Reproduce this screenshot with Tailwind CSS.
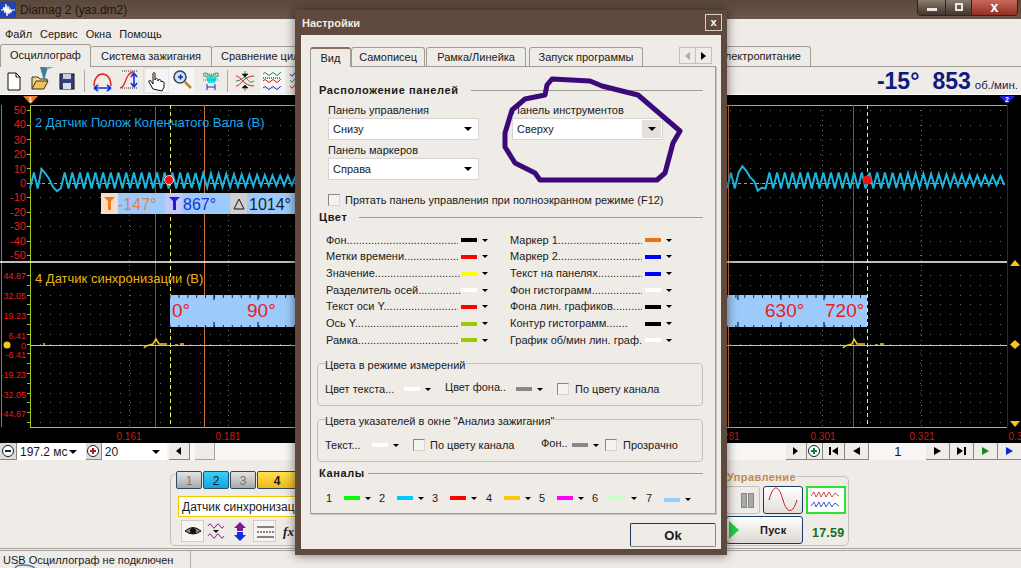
<!DOCTYPE html>
<html lang="ru">
<head>
  <meta charset="UTF-8" />
  <title>Diamag 2</title>
  <script src="https://cdn.jsdelivr.net/npm/@tailwindcss/browser@4"></script>
</head>
<body class="w-[1021px] h-[568px] overflow-hidden relative bg-[#efebe7] text-[11px] leading-none text-[#1a1a1a] font-['Liberation_Sans',sans-serif]">

  <!-- Main window -->
  <div class="flex flex-col h-[568px]">

    <!-- Title bar -->
    <div class="h-[19px] shrink-0 flex items-center bg-gradient-to-b from-[#5c483b] to-[#6b584b] relative">
      <svg width="16" height="16" viewBox="0 0 16 16" class="ml-0 shrink-0">
        <rect width="16" height="16" fill="#1f45b5"/>
        <path d="M1 8h2l1-3 1 6 1-9 1 12 1-10 1 8 1-5 1 3 1-2h3" fill="none" stroke="#fff" stroke-width="1.2"/>
      </svg>
      <span class="ml-[4px] text-[12px] text-[#1e1510]">Diamag 2 (уаз.dm2)</span>
      <!-- Window buttons -->
      <div class="ml-auto mr-[3px] -mt-[4px] flex h-[16px] rounded-b-[4px] overflow-hidden border border-t-0 border-[#2f251e]">
        <div class="w-[28px] flex items-center justify-center bg-gradient-to-b from-[#8a7a6e] to-[#43352c] border-r border-[#2f251e]"><div class="w-[10px] h-[3px] mt-[5px] bg-[#e8e8e8]"></div></div>
        <div class="w-[26px] flex items-center justify-center bg-gradient-to-b from-[#8a7a6e] to-[#43352c] border-r border-[#2f251e]"><div class="w-[8px] h-[8px] border-2 border-[#e8e8e8]"></div></div>
        <div class="w-[45px] flex items-center justify-center bg-gradient-to-b from-[#c9695a] to-[#8f3024] text-white font-bold text-[14px]">x</div>
      </div>
    </div>

    <!-- Menu -->
    <div class="h-[25px] shrink-0 flex items-center gap-[8px] pl-[5px] pt-[5px]">
      <span>Файл</span><span>Сервис</span><span>Окна</span><span>Помощь</span>
    </div>

    <!-- Tabs -->
    <div class="h-[23px] shrink-0 flex items-end border-b border-[#a09c98] relative">
      <div class="w-[91px] h-[23px] pt-[5px] text-center bg-[#efebe7] border border-b-0 border-[#a09c98] rounded-t-[3px] relative z-10 -mb-px">Осциллограф</div>
      <div class="w-[121px] h-[20px] pt-[4px] text-center border border-l-0 border-b-0 border-[#a09c98] rounded-t-[3px]">Система зажигания</div>
      <div class="w-[130px] h-[20px] pt-[4px] pl-[9px] border border-l-0 border-b-0 border-[#a09c98] rounded-t-[3px] whitespace-nowrap overflow-hidden">Сравнение цилиндров</div>
      <div class="w-[469px] h-[20px] pt-[4px] pr-[9px] text-right border border-l-0 border-b-0 border-[#a09c98] rounded-t-[3px]">Электропитание</div>
    </div>

    <!-- Toolbar -->
    <div class="h-[27px] shrink-0 flex items-center pl-[4px] relative">
      <svg width="310" height="27" viewBox="0 67 310 27" class="shrink-0 -ml-[4px]">
        <path d="M8 73h8l4 4v13H8z" fill="#fff" stroke="#111"/><path d="M16 73v4h4" fill="none" stroke="#111"/>
        <path d="M32 89v-12h6l2 2h7v3" fill="#f5d98a" stroke="#333"/><path d="M32 89l4-8h12l-4 8z" fill="#f2c14e" stroke="#333"/>
        <rect x="60" y="74" width="14" height="15" fill="#34407a" stroke="#111"/><rect x="63" y="74" width="8" height="5" fill="#ccd"/><rect x="63" y="83" width="8" height="6" fill="#dde"/>
        <line x1="84.500" y1="70" x2="84.500" y2="92" stroke="#aaa"/>
        <path d="M94 86c0-16 17-16 17 0" fill="none" stroke="#d22" stroke-width="1.300"/><path d="M94 88h17M94 88l4-3M94 88l4 3M111 88l-4-3M111 88l-4 3" stroke="#1133dd" stroke-width="1.600" fill="none"/>
        <path d="M120 88c6 0 5-16 14-16" fill="none" stroke="#d22" stroke-width="1.300"/><path d="M122 71h16M122 88h16" stroke="#333" stroke-dasharray="1 1"/><path d="M134 73v14M134 73l-3 4M134 73l3 4M134 87l-3-4M134 87l3-4" stroke="#1133dd" stroke-width="1.600" fill="none"/>
        <rect x="144" y="68" width="25" height="25" fill="#f7f5f3" stroke="#d8d4d0"/>
        <path d="M153 89l-4-7c-1-2 1-2 2-1l2 3v-10c0-2 2-2 2 0v6c0-2 3-2 3 0v1c0-2 3-2 3 0v1c0-1 3-1 3 1v4l-2 4z" fill="#fff" stroke="#111"/>
        <rect x="169" y="68" width="25" height="25" fill="#f7f5f3"/>
        <circle cx="180" cy="77" r="6" fill="#cfe4f7" stroke="#345" stroke-width="1.500"/><path d="M178 77h5M180.500 74.500v5" stroke="#1133aa" stroke-width="1.600"/><path d="M185 82l6 6" stroke="#b08a30" stroke-width="2.500"/>
        <path d="M203 74c4-3 6 2 8 2s4-5 8-2M203 76h16" stroke="#0a6" fill="none"/><path d="M206 77h11l-2 6h-7z" fill="#2de"/><path d="M203 74h16M203 80h16" stroke="#c33" stroke-dasharray="1 1"/><path d="M207 87h8M207 84v6M215 84v6" stroke="#1133dd" fill="none"/>
        <line x1="227.500" y1="70" x2="227.500" y2="92" stroke="#aaa"/>
        <path d="M236 76c5 0 7 10 18 10M236 86c5 0 7-10 18-10" stroke="#c22" fill="none"/><path d="M236 81c5 0 7-4 9-4s4 8 9 4" stroke="#284" fill="none"/><path d="M245 71v3M245 88v3M242 74h6l-3 3zM242 88h6l-3-3z" fill="#111" stroke="#111" stroke-width=".6"/>
        <rect x="260" y="68" width="25" height="25" fill="#f7f5f3"/>
        <path d="M263 74q2-3 4 0t4 0 4 0 4 0 2-1" stroke="#186" fill="none"/><path d="M263 78h18" stroke="#111" stroke-dasharray="1 1"/><path d="M263 81q2-3 4 0t4 0 4 0 4 0 2-1" stroke="#c22" fill="none"/><path d="M263 88q2-3 4 0t4 0 4 0 4 0 2-1" stroke="#22c" fill="none"/>
        <path d="M290 74q2 4 4 0t4 0 4 0" stroke="#22c" fill="none"/><path d="M290 80q2 4 4 0t4 0 4 0" stroke="#0a6" fill="none"/><path d="M290 86q2 4 4 0t4 0 4 0" stroke="#c22" fill="none"/>
      </svg>
      <div class="ml-auto mr-[3px] flex items-baseline text-[#0f1a80] font-bold text-[23px] mt-[2px]">
        <span>-15°</span><span class="ml-[13px]">853</span><span class="ml-[4px] font-normal text-[11.500px] text-[#1a1a50]">об./мин.</span>
      </div>
    </div>

    <!-- Scope plot -->
    <div class="h-[349px] shrink-0 bg-black border-t border-white relative">
      <svg id="plot" width="1021" height="348" viewBox="0 95 1021 348" class="block font-['Liberation_Sans',sans-serif]">
        <g id="grid"></g>
        <g stroke="#a2c81e" stroke-width="1"><path d="M30.500 105v323M30 105.500h977M30 427.500h977" fill="none"/></g>
        <g id="ticks"></g>
        <!-- markers -->
        <line x1="1.500" y1="105" x2="1.500" y2="427" stroke="#b8683c"/>
        <line x1="155.500" y1="105" x2="155.500" y2="427" stroke="#4658b8"/>
        <line x1="853.500" y1="105" x2="853.500" y2="427" stroke="#4658b8"/>
        <line x1="204.500" y1="105" x2="204.500" y2="427" stroke="#d0743c"/>
        <line x1="728.500" y1="105" x2="728.500" y2="427" stroke="#d0743c"/>
        <line x1="1007.500" y1="105" x2="1007.500" y2="427" stroke="#1c1c9c"/>
        <line x1="170.500" y1="105" x2="170.500" y2="427" stroke="#f4f060" stroke-dasharray="4 3"/>
        <line x1="867.500" y1="105" x2="867.500" y2="427" stroke="#f4f060" stroke-dasharray="4 3"/>
        <line x1="30" y1="183.500" x2="1007" y2="183.500" stroke="#b9b23a" stroke-dasharray="3 3"/>
        <line x1="0" y1="262" x2="1007" y2="262" stroke="#fff" stroke-width="1.500"/>
        <!-- channel 2 -->
        <polyline id="wave" fill="none" stroke="#1cb4de" stroke-width="2"/>
        <circle cx="169" cy="180" r="4.500" fill="#f01010" stroke="#fff" stroke-width=".8"/>
        <circle cx="867" cy="180" r="4.500" fill="#f01010"/>
        <!-- channel 4 -->
        <line x1="30" y1="345.500" x2="1007" y2="345.500" stroke="#f2c81a" stroke-width="1.200"/>
        <path d="M144 348l2-2 7-2 3-5 3 5h8M175 345h3M180 344h4M43 344h2" fill="none" stroke="#f2c81a" stroke-width="1.500"/>
        <path d="M843 348l2-2 7-2 2-5 3 5h8M875 345h3M880 344h4" fill="none" stroke="#f2c81a" stroke-width="1.500"/>
        <!-- handles -->
        <path d="M23 96h15l-7.500 8z" fill="#f07a1e"/><text x="30.500" y="102" font-size="7" font-weight="bold" fill="#fff" text-anchor="middle">1</text>
        <path d="M999 96h16l-8 8z" fill="#1c1ce8"/><text x="1007" y="102" font-size="7" font-weight="bold" fill="#fff" text-anchor="middle">2</text>
        <path d="M1015 260l5 6h-10z" fill="#f2c81a"/>
        <path d="M1015 340l5 4.500-5 4.500-5-4.500z" fill="#f2c81a"/>
        <path d="M1010 421h10l-5 6z" fill="#f2c81a"/>
        <circle cx="7" cy="345" r="3.500" fill="#f2c81a"/>
        <!-- axis labels -->
        <g fill="#ee1c1c" font-size="11" text-anchor="end">
          <text x="26" y="114">50</text><text x="26" y="128">40</text><text x="26" y="144">30</text><text x="26" y="158">20</text><text x="26" y="173">10</text><text x="26" y="187">0</text><text x="26" y="201">-10</text><text x="26" y="216">-20</text><text x="26" y="230">-30</text><text x="26" y="245">-40</text><text x="26" y="259">-50</text>
          <g font-size="9"><text x="26" y="279">44.87</text><text x="26" y="299">32.05</text><text x="26" y="319">19.23</text><text x="26" y="339">6.41</text><text x="26" y="349">0</text><text x="26" y="358">-6.41</text><text x="26" y="378">-19.23</text><text x="26" y="398">-32.05</text><text x="26" y="417">-44.87</text></g>
        </g>
        <g fill="#c81c1c" font-size="10" text-anchor="middle">
          <text x="129" y="440">0.161</text><text x="228" y="440">0.181</text><text x="727" y="440">0.281</text><text x="823" y="440">0.301</text><text x="922" y="440">0.321</text><text x="1021" y="440">0.341</text>
        </g>
        <text x="35" y="127" font-size="13" fill="#18a8ee">2 Датчик Полож Коленчатого Вала (B)</text>
        <text x="35" y="283" font-size="13" fill="#efb414">4 Датчик синхронизации (B)</text>
        <!-- angle read-out -->
        <rect x="101" y="193" width="194" height="21" fill="#9ccbfb"/>
        <rect x="101" y="193" width="17" height="21" fill="#fbdcc8"/><rect x="165" y="193" width="17" height="21" fill="#c8c8f8"/><rect x="230" y="193" width="17" height="21" fill="#cfcfcf"/>
        <path d="M104 197h11l-4 4v9h-3v-9z" fill="#f07a1e"/><path d="M169 197h11l-4 4v9h-3v-9z" fill="#1c1ce8"/><path d="M239 199l5 10h-10z" fill="none" stroke="#111"/>
        <g font-size="16"><text x="118" y="210" fill="#d8805a">-147°</text><text x="183" y="210" fill="#1c30d8">867°</text><text x="249" y="210" fill="#14203c">1014°</text></g>
        <!-- crank ruler -->
        <rect x="170" y="295" width="125" height="32" fill="#9ccbfb"/><rect x="727" y="295" width="140" height="32" fill="#9ccbfb"/>
        <g id="rticks" stroke="#222"></g>
        <g font-size="19" fill="#e82020"><text x="172" y="317">0°</text><text x="247" y="317">90°</text><text x="765" y="317">630°</text><text x="825" y="317">720°</text></g>
      </svg>
    </div>

    <!-- Time strip -->
    <div class="h-[17px] shrink-0 flex items-center bg-[#f8f6f4]">
      <div class="w-[17px] h-[17px] flex items-center justify-center bg-[#dfdbd7] border-r border-b border-[#8a8682]"><svg width="14" height="14"><circle cx="7" cy="7" r="5.500" fill="#fff" stroke="#123"/><path d="M4 7h6" stroke="#123" stroke-width="2"/></svg></div>
      <div class="w-[69px] h-[17px] flex items-center bg-white pl-[3px] text-[12px] whitespace-nowrap">197.2 мс<span class="ml-auto mr-[9px] border-x-[4px] border-t-[4px] border-x-transparent border-t-black"></span></div>
      <div class="w-[16px] h-[17px] flex items-center justify-center bg-[#dfdbd7] border-r border-b border-[#8a8682]"><svg width="14" height="14"><circle cx="7" cy="7" r="5.500" fill="#fff" stroke="#123"/><path d="M4 7h6M7 4v6" stroke="#c01020" stroke-width="2"/></svg></div>
      <div class="w-[65px] h-[17px] flex items-center bg-white pl-[3px] text-[12px]">20<span class="ml-auto mr-[7px] border-x-[4px] border-t-[4px] border-x-transparent border-t-black"></span></div>
      <div class="ml-[2px] w-[21px] h-[17px] flex items-center justify-center bg-[#efebe7] border-r border-b border-[#8a8682]"><span class="border-y-[4px] border-r-[5px] border-y-transparent border-r-black"></span></div>
      <div class="ml-[5px] w-[20px] h-[17px] bg-[#efebe7] border-r border-b border-[#a5a19d]"></div>
      <div class="ml-[571px] w-[21px] h-[17px] flex items-center justify-center bg-[#efebe7] border-r border-b border-[#8a8682]"><span class="border-y-[4px] border-l-[5px] border-y-transparent border-l-black"></span></div>
      <div class="w-[17px] h-[17px] flex items-center justify-center bg-[#efebe7] border-r border-b border-[#8a8682]"><svg width="14" height="14"><circle cx="7" cy="7" r="5.500" fill="#fff" stroke="#123"/><path d="M4 7h6M7 4v6" stroke="#108030" stroke-width="2"/></svg></div>
      <div class="w-[22px] h-[17px] flex items-center justify-center gap-[1px] bg-[#efebe7] border-r border-b border-[#8a8682]"><span class="w-[2px] h-[8px] bg-black"></span><span class="border-y-[4px] border-r-[6px] border-y-transparent border-r-black"></span></div>
      <div class="w-[24px] h-[17px] flex items-center justify-center bg-[#efebe7] border-r border-b border-[#8a8682]"><span class="border-y-[4px] border-r-[7px] border-y-transparent border-r-black"></span></div>
      <div class="w-[57px] h-[17px] text-center text-[13px] pt-[2px]">1</div>
      <div class="w-[24px] h-[17px] flex items-center justify-center bg-[#efebe7] border-r border-b border-[#8a8682]"><span class="border-y-[4px] border-l-[7px] border-y-transparent border-l-black"></span></div>
      <div class="w-[24px] h-[17px] flex items-center justify-center gap-[1px] bg-[#efebe7] border-r border-b border-[#8a8682]"><span class="border-y-[4px] border-l-[6px] border-y-transparent border-l-black"></span><span class="w-[2px] h-[8px] bg-black"></span></div>
      <div class="w-[24px] h-[17px] flex items-center justify-center bg-[#efebe7] border-r border-b border-[#8a8682]"><span class="border-y-[4px] border-l-[7px] border-y-transparent border-l-[#108a20]"></span></div>
      <div class="w-[23px] h-[17px] flex items-center justify-center bg-[#efebe7] border-b border-[#8a8682]"><span class="border-y-[4px] border-l-[7px] border-y-transparent border-l-[#1020e0]"></span></div>
    </div>

    <!-- Control panel -->
    <div class="h-[88px] shrink-0 flex pt-[14px] pl-[170px] gap-[250px]">
      <div class="w-[300px] h-[72px] border border-[#c4c0bc] rounded-[5px] relative">
        <div class="absolute left-[5px] -top-[4px] flex gap-[1px]">
          <div class="w-[26px] h-[18px] text-center pt-[3px] text-[12px] text-[#777] bg-gradient-to-b from-[#e4e4e4] to-[#a8a8a8] border border-[#2c4a66] rounded-[2px]">1</div>
          <div class="w-[26px] h-[18px] text-center pt-[3px] text-[12px] bg-gradient-to-b from-[#38d0f8] to-[#08a8e0] border border-[#2c4a66] rounded-[2px]">2</div>
          <div class="w-[26px] h-[18px] text-center pt-[3px] text-[12px] text-[#777] bg-gradient-to-b from-[#e4e4e4] to-[#a8a8a8] border border-[#2c4a66] rounded-[2px]">3</div>
          <div class="w-[40px] h-[18px] text-center pt-[3px] text-[12px] font-bold bg-gradient-to-b from-[#ffe050] to-[#f4b808] border border-[#2c4a66] rounded-[2px]">4</div>
        </div>
        <div class="absolute left-[7px] top-[21px] w-[280px] h-[21px] bg-white border border-[#f0c800] pl-[3px] pt-[4px] text-[12px] whitespace-nowrap">Датчик синхронизации</div>
        <div class="absolute left-[10px] top-[45px] flex items-center gap-[1px]">
          <svg width="23" height="22" class="bg-[#f7f5f3] border border-[#d0ccc8]"><path d="M3 10q8-7 16 0-8 6-16 0z" fill="#888" stroke="#111"/><circle cx="11" cy="10" r="3" fill="#111"/></svg>
          <svg width="23" height="22"><path d="M3 6q2-4 4 0t4 0 4 0 4 0M3 16q2-4 4 0t4 0 4 0 4 0" stroke="#8a1a9a" fill="none"/><path d="M8 10h6l-3 3z" fill="#111"/></svg>
          <svg width="23" height="22"><path d="M11 2l6 6h-3v3H8V8H5z" fill="#7a1a9a"/><path d="M11 21l6-6h-3v-3H8v3H5z" fill="#1030e0"/></svg>
          <svg width="23" height="22" class="bg-[#f7f5f3] border border-[#d0ccc8]"><path d="M3 6h17M3 16h17" stroke="#111"/><path d="M3 11h17" stroke="#111" stroke-dasharray="2 1"/></svg>
          <span class="w-[23px] text-center italic font-bold font-['Liberation_Serif',serif] text-[13px]">fx</span>
        </div>
      </div>
      <!-- Управление -->
      <div class="w-[129px] h-[70px] mt-[2px] border border-[#c4c0bc] rounded-[5px] relative">
        <span class="absolute left-[5px] -top-[5px] bg-[#efebe7] font-bold text-[11px] tracking-[0.4px] text-[#c08a50] px-[1px]">Управление</span>
        <div class="absolute left-[5px] top-[9px] w-[34px] h-[28px] border border-[#c4c0bc] rounded-[3px] flex items-center justify-center gap-[1px] pl-[8px]"><span class="w-[6px] h-[15px] bg-[#a8a8a8] border border-[#888]"></span><span class="w-[6px] h-[15px] bg-[#a8a8a8] border border-[#888]"></span></div>
        <div class="absolute left-[42px] top-[9px] w-[40px] h-[28px] border border-[#1c3a66] rounded-[3px] bg-gradient-to-b from-white to-[#e2deda]"><svg width="38" height="26"><path d="M5 13c5-18 10-14 14 0s10 14 14 0" fill="none" stroke="#c81c1c"/></svg></div>
        <div class="absolute left-[85px] top-[9px] w-[40px] h-[28px] border-2 border-[#30e030] bg-white"><svg width="36" height="24"><path d="M3 8l3-4 2 5 3-5 2 5 3-5 2 5 3-5 3 5 3-4 4 3" fill="none" stroke="#c81c1c" stroke-width=".8"/><path d="M3 18l3-4 2 5 3-5 2 5 3-5 2 5 3-5 3 5 3-4 4 3" fill="none" stroke="#1030c0" stroke-width=".8"/></svg></div>
        <div class="absolute left-[5px] top-[39px] w-[77px] h-[28px] border border-[#1c3a66] rounded-[3px] bg-gradient-to-b from-white to-[#dcd8d4] flex items-center">
          <span class="ml-[2px] border-y-[9px] border-l-[10px] border-y-transparent border-l-[#20d040]"></span>
          <span class="ml-[21px] font-bold text-[11px] tracking-[0.3px]">Пуск</span>
        </div>
        <span class="absolute left-[91px] top-[50px] font-bold text-[12.500px] text-[#107020] tracking-[0.2px]">17.59</span>
      </div>
    </div>

    <!-- Status bar -->
    <div class="flex-1 flex border-t-[3px] border-double border-[#a8a4a0]">
      <div class="w-[191px] pl-[3px] pt-[4px] border-r border-[#b0aca8] whitespace-nowrap">USB Осциллограф не подключен</div>
    </div>
  </div>

  <!-- Settings dialog -->
  <div class="absolute left-[295px] top-[10px] w-[432px] h-[545px] bg-[#5f4a3d] pt-[25px] px-[6px] pb-[6px] shadow-[0_0_10px_rgba(0,0,0,0.55)]">
    <div class="absolute left-[7px] top-[8px] font-bold text-[#f0ece8]">Настройки</div>
    <div class="absolute right-[5px] top-[4px] w-[17px] h-[17px] border border-[#d8d0c8] flex items-center justify-center text-white font-bold">x</div>

    <div class="w-[420px] h-[514px] bg-[#efebe7] px-[9px] pt-[11px] relative">
      <!-- Dialog tabs -->
      <div class="flex items-end h-[20px]">
        <div class="w-[41px] h-[20px] pt-[4px] text-center border border-b-0 border-[#a09c98] border-t-[#8a6e58] border-t-2 rounded-t-[3px] bg-[#efebe7] relative z-10 -mb-px">Вид</div>
        <div class="w-[75px] h-[19px] pt-[4px] text-center border border-b-0 border-[#a09c98] rounded-t-[3px]">Самописец</div>
        <div class="ml-[1px] w-[100px] h-[19px] pt-[4px] text-center border border-b-0 border-[#a09c98] rounded-t-[3px]">Рамка/Линейка</div>
        <div class="ml-[3px] w-[115px] h-[19px] pt-[4px] text-center border border-b-0 border-[#a09c98] rounded-t-[3px]">Запуск программы</div>
        <div class="ml-[36px] mb-[2px] w-[33px] h-[17px] flex border border-[#c4c0bc] bg-[#efebe7]">
          <div class="flex-1 flex items-center justify-center border-r border-[#c4c0bc]"><span class="border-y-[4px] border-r-[5px] border-y-transparent border-r-[#aaa]"></span></div>
          <div class="flex-1 flex items-center justify-center"><span class="border-y-[4px] border-l-[5px] border-y-transparent border-l-black"></span></div>
        </div>
      </div>

      <!-- Tab page -->
      <div class="w-[406px] h-[448px] border border-[#a09c98] shadow-[1px_1px_0_#c4c0bc] pl-[8px] pr-[12px] pt-[17px]">
        <div class="flex items-center gap-[12px] h-[12px]">
          <span class="font-bold tracking-[0.6px]">Расположение панелей</span><span class="flex-1 h-px bg-[#a09c98]"></span>
        </div>
        <div class="flex mt-[9px] pl-[9px]">
          <div class="w-[184px]">
            <div class="h-[13px]">Панель управления</div>
            <div class="w-[151px] h-[22px] bg-white border border-[#d8d4d0] pl-[4px] flex items-center">Снизу<span class="ml-auto mr-[6px] border-x-[4px] border-t-[4px] border-x-transparent border-t-black"></span></div>
            <div class="h-[13px] mt-[5px]">Панель маркеров</div>
            <div class="w-[151px] h-[22px] bg-white border border-[#d8d4d0] pl-[4px] flex items-center">Справа<span class="ml-auto mr-[6px] border-x-[4px] border-t-[4px] border-x-transparent border-t-black"></span></div>
          </div>
          <div class="w-[151px]">
            <div class="h-[13px]">Панель инструментов</div>
            <div class="w-[151px] h-[22px] bg-white border border-[#d8d4d0] pl-[4px] flex items-center">Сверху<span class="ml-auto w-[19px] h-[18px] mr-[1px] bg-[#e4e0dc] flex items-center justify-center"><span class="border-x-[4px] border-t-[4px] border-x-transparent border-t-black"></span></span></div>
          </div>
        </div>
        <div class="flex items-center mt-[14px] pl-[9px] gap-[5px]">
          <span class="w-[12px] h-[12px] bg-[#f5f2ef] border border-[#8a8682] border-r-[#d8d4d0] border-b-[#d8d4d0]"></span>
          <span>Прятать панель управления при полноэкранном режиме (F12)</span>
        </div>

        <div class="flex items-center gap-[12px] h-[12px] mt-[5px]">
          <span class="font-bold tracking-[0.6px]">Цвет</span><span class="flex-1 h-px bg-[#a09c98]"></span>
        </div>
        <div class="grid grid-cols-[184px_184px] auto-rows-[16.670px] pl-[7px] mt-[9px]">
          <div class="flex items-center"><span data-leader class="w-[132px] overflow-hidden whitespace-nowrap">Фон.................................................</span><span class="ml-[3px] w-[16px] h-[4px] bg-black"></span><span class="ml-[5px] border-x-[3px] border-t-[3px] border-x-transparent border-t-black"></span></div>
          <div class="flex items-center"><span data-leader class="w-[132px] overflow-hidden whitespace-nowrap">Маркер 1.........................................</span><span class="ml-[3px] w-[16px] h-[4px] bg-[#f07010]"></span><span class="ml-[5px] border-x-[3px] border-t-[3px] border-x-transparent border-t-black"></span></div>
          <div class="flex items-center"><span data-leader class="w-[132px] overflow-hidden whitespace-nowrap">Метки времени................................</span><span class="ml-[3px] w-[16px] h-[4px] bg-[#ff0000]"></span><span class="ml-[5px] border-x-[3px] border-t-[3px] border-x-transparent border-t-black"></span></div>
          <div class="flex items-center"><span data-leader class="w-[132px] overflow-hidden whitespace-nowrap">Маркер 2.........................................</span><span class="ml-[3px] w-[16px] h-[4px] bg-[#0000ff]"></span><span class="ml-[5px] border-x-[3px] border-t-[3px] border-x-transparent border-t-black"></span></div>
          <div class="flex items-center"><span data-leader class="w-[135px] overflow-hidden whitespace-nowrap">Значение..........................................</span><span class="w-[16px] h-[4px] bg-[#ffff00]"></span><span class="ml-[5px] border-x-[3px] border-t-[3px] border-x-transparent border-t-black"></span></div>
          <div class="flex items-center"><span data-leader class="w-[132px] overflow-hidden whitespace-nowrap">Текст на панелях..............................</span><span class="ml-[3px] w-[16px] h-[4px] bg-[#0000ff]"></span><span class="ml-[5px] border-x-[3px] border-t-[3px] border-x-transparent border-t-black"></span></div>
          <div class="flex items-center"><span data-leader class="w-[135px] overflow-hidden whitespace-nowrap">Разделитель осей............................</span><span class="w-[16px] h-[4px] bg-white"></span><span class="ml-[5px] border-x-[3px] border-t-[3px] border-x-transparent border-t-black"></span></div>
          <div class="flex items-center"><span data-leader class="w-[132px] overflow-hidden whitespace-nowrap">Фон гистограмм...............................</span><span class="ml-[3px] w-[16px] h-[4px] bg-white"></span><span class="ml-[5px] border-x-[3px] border-t-[3px] border-x-transparent border-t-black"></span></div>
          <div class="flex items-center"><span data-leader class="w-[132px] overflow-hidden whitespace-nowrap">Текст оси Y......................................</span><span class="ml-[3px] w-[16px] h-[4px] bg-[#ff0000]"></span><span class="ml-[5px] border-x-[3px] border-t-[3px] border-x-transparent border-t-black"></span></div>
          <div class="flex items-center"><span data-leader class="w-[132px] overflow-hidden whitespace-nowrap">Фона лин. графиков...........................</span><span class="ml-[3px] w-[16px] h-[4px] bg-black"></span><span class="ml-[5px] border-x-[3px] border-t-[3px] border-x-transparent border-t-black"></span></div>
          <div class="flex items-center"><span data-leader class="w-[132px] overflow-hidden whitespace-nowrap">Ось Y..............................................</span><span class="ml-[3px] w-[16px] h-[4px] bg-[#99cc00]"></span><span class="ml-[5px] border-x-[3px] border-t-[3px] border-x-transparent border-t-black"></span></div>
          <div class="flex items-center"><span data-leader class="w-[132px] overflow-hidden whitespace-nowrap">Контур гистограмм.......</span><span class="ml-[3px] w-[16px] h-[4px] bg-black"></span><span class="ml-[5px] border-x-[3px] border-t-[3px] border-x-transparent border-t-black"></span></div>
          <div class="flex items-center"><span data-leader class="w-[132px] overflow-hidden whitespace-nowrap">Рамка..............................................</span><span class="ml-[3px] w-[16px] h-[4px] bg-[#99cc00]"></span><span class="ml-[5px] border-x-[3px] border-t-[3px] border-x-transparent border-t-black"></span></div>
          <div class="flex items-center"><span data-leader class="w-[132px] overflow-hidden whitespace-nowrap">График об/мин лин. граф.</span><span class="ml-[3px] w-[16px] h-[4px] bg-white"></span><span class="ml-[5px] border-x-[3px] border-t-[3px] border-x-transparent border-t-black"></span></div>
        </div>

        <!-- Measure mode colours -->
        <div class="mt-[14px] ml-[-2px] w-[386px] h-[43px] border border-[#c4c0bc] rounded-[4px] relative flex items-center pl-[7px] pt-[10px]">
          <span class="absolute left-[7px] -top-[4px] bg-[#efebe7] pr-[1px]">Цвета в режиме измерений</span>
          <span class="w-[79px] whitespace-nowrap">Цвет текста...</span><span class="w-[16px] h-[4px] bg-white"></span><span class="ml-[5px] border-x-[3px] border-t-[3px] border-x-transparent border-t-black"></span>
          <span class="ml-[14px] w-[71px] whitespace-nowrap -mt-[3px]">Цвет фона..</span><span class="w-[16px] h-[4px] bg-[#888]"></span><span class="ml-[5px] border-x-[3px] border-t-[3px] border-x-transparent border-t-black"></span>
          <span class="ml-[14px] w-[12px] h-[12px] bg-[#f5f2ef] border border-[#8a8682] border-r-[#d8d4d0] border-b-[#d8d4d0]"></span><span class="ml-[6px]">По цвету канала</span>
        </div>
        <!-- Ignition window colours -->
        <div class="mt-[13px] ml-[-2px] w-[386px] h-[43px] border border-[#c4c0bc] rounded-[4px] relative flex items-center pl-[7px] pt-[10px]">
          <span class="absolute left-[7px] -top-[4px] bg-[#efebe7] pr-[1px]">Цвета указателей в окне "Анализ зажигания"</span>
          <span class="w-[47px] whitespace-nowrap">Текст...</span><span class="w-[16px] h-[4px] bg-white"></span><span class="ml-[5px] border-x-[3px] border-t-[3px] border-x-transparent border-t-black"></span>
          <span class="ml-[14px] w-[12px] h-[12px] bg-[#f5f2ef] border border-[#8a8682] border-r-[#d8d4d0] border-b-[#d8d4d0]"></span><span class="ml-[5px] w-[111px]">По цвету канала</span>
          <span class="w-[31px] whitespace-nowrap -mt-[3px]">Фон..</span><span class="w-[16px] h-[4px] bg-[#888]"></span><span class="ml-[5px] border-x-[3px] border-t-[3px] border-x-transparent border-t-black"></span>
          <span class="ml-[6px] w-[12px] h-[12px] bg-[#f5f2ef] border border-[#8a8682] border-r-[#d8d4d0] border-b-[#d8d4d0]"></span><span class="ml-[6px]">Прозрачно</span>
        </div>

        <div class="flex items-center gap-[3px] h-[12px] mt-[6px]">
          <span class="font-bold tracking-[0.6px]">Каналы</span><span class="flex-1 h-px bg-[#a09c98]"></span>
        </div>
        <div class="flex items-center pl-[7px] mt-[13px]">
          <span class="w-[18px]">1</span><span class="w-[16px] h-[4px] bg-[#00ff00]"></span><span class="ml-[5px] border-x-[3px] border-t-[3px] border-x-transparent border-t-black"></span>
          <span class="ml-[8px] w-[18px]">2</span><span class="w-[16px] h-[4px] bg-[#00c8ff]"></span><span class="ml-[5px] border-x-[3px] border-t-[3px] border-x-transparent border-t-black"></span>
          <span class="ml-[8px] w-[18px]">3</span><span class="w-[16px] h-[4px] bg-[#ff0000]"></span><span class="ml-[5px] border-x-[3px] border-t-[3px] border-x-transparent border-t-black"></span>
          <span class="ml-[9px] w-[18px]">4</span><span class="w-[16px] h-[4px] bg-[#ffc800]"></span><span class="ml-[5px] border-x-[3px] border-t-[3px] border-x-transparent border-t-black"></span>
          <span class="ml-[8px] w-[18px]">5</span><span class="w-[16px] h-[4px] bg-[#ff00ff]"></span><span class="ml-[5px] border-x-[3px] border-t-[3px] border-x-transparent border-t-black"></span>
          <span class="ml-[8px] w-[18px]">6</span><span class="w-[16px] h-[4px] bg-[#c8ffc8]"></span><span class="ml-[5px] border-x-[3px] border-t-[3px] border-x-transparent border-t-black"></span>
          <span class="ml-[9px] w-[18px]">7</span><span class="w-[16px] h-[4px] bg-[#99ccff] mt-[3px]"></span><span class="ml-[5px] mt-[3px] border-x-[3px] border-t-[3px] border-x-transparent border-t-black"></span>
        </div>
      </div>

      <!-- Ok -->
      <div class="ml-[320px] mt-[9px] w-[86px] h-[24px] border border-[#1c3a66] border-r-[#8a8682] border-b-[#8a8682] rounded-[2px] flex items-center justify-center font-bold text-[13px]">Ok</div>
    </div>
  </div>

  <!-- Marker drawn over the dialog -->
  <svg class="absolute left-0 top-0 pointer-events-none" width="1021" height="568">
    <path d="M552 79L590 81 602 86 638 95 680 131 673 143 665 173 657 180 540 180 535 173 515 163 505 147 505 133 512 110 525 99 545 95 547 85z" fill="none" stroke="#3c0a78" stroke-width="5" stroke-linejoin="round"/>
    <path d="M38 59l15 8-6 2-3 11z" fill="#6fa8b8" stroke="#5a8a9a" stroke-width=".5"/><path d="M38 59l9 10-3 11z" fill="#3f7f9a"/>
    <path d="M15 568c2-4 14-4 20 0" fill="none" stroke="#4a80b8" stroke-width="1.500"/>
  </svg>

  <script>
    const NS = 'http://www.w3.org/2000/svg';
    const addLine = (parent, x1, y1, x2, y2, attrs) => {
      const l = document.createElementNS(NS, 'line');
      Object.entries({ x1, y1, x2, y2, ...attrs }).forEach(([k, v]) => l.setAttribute(k, v));
      parent.appendChild(l);
    };

    // dotted grid
    const grid = document.getElementById('grid');
    const dots = { stroke: '#6a6a6a', 'stroke-dasharray': '1 9' };
    for (let y = 110; y < 262; y += 14.5) addLine(grid, 30, Math.round(y) + 0.5, 1007, Math.round(y) + 0.5, dots);
    for (let y = 275; y < 427; y += 9.8) addLine(grid, 30, Math.round(y) + 0.5, 1007, Math.round(y) + 0.5, dots);
    for (let x = 129; x < 1007; x += 99) addLine(grid, x + 0.5, 105, x + 0.5, 427, { stroke: '#6a6a6a', 'stroke-dasharray': '1 4' });

    // axis ticks
    const ticks = document.getElementById('ticks');
    for (let y = 110; y < 262; y += 14.5) addLine(ticks, 27, Math.round(y) + 0.5, 30, Math.round(y) + 0.5, { stroke: '#a2c81e' });
    for (let y = 275; y < 427; y += 9.8) addLine(ticks, 27, Math.round(y) + 0.5, 30, Math.round(y) + 0.5, { stroke: '#a2c81e' });

    // ruler ticks
    const rticks = document.getElementById('rticks');
    for (let x = 170; x < 295; x += 8.9) addLine(rticks, x, 295, x, 298, {});
    for (let x = 170; x < 295; x += 8.9) addLine(rticks, x, 325, x, 327, {});
    for (let x = 727; x < 867; x += 8.9) addLine(rticks, x, 295, x, 298, {});
    for (let x = 727; x < 867; x += 8.9) addLine(rticks, x, 325, x, 327, {});
    [214, 258, 738, 781, 824].forEach(x => { addLine(rticks, x, 295, x, 300, { stroke: '#000' }); addLine(rticks, x, 322, x, 327, { stroke: '#000' }); });

    // channel 2 trace, repeated over two revolutions
    const pts = [];
    const sample = (x0, x1, off) => {
      const period = 7.7;
      for (let x = x0; x <= x1; x += period / 2) {
        const t = x - off;
        const n = Math.round((x - x0) / (period / 2));
        const amp = t < 180 ? 8 : Math.max(8 - (t - 180) * 0.03, 4.5);
        let y = 180.5 + (n % 2 ? -amp : amp);
        if (t > 38 && t < 46) y = 167 + (t - 40) * 1.2;
        else if (t >= 46 && t < 52) y = 176 + (t - 46) * 1;
        else if (t >= 52 && t < 60) y = 193 - Math.abs(t - 56) * 2;
        pts.push(x.toFixed(1) + ',' + y.toFixed(1));
      }
    };
    sample(30, 300, 0);
    document.getElementById('wave').setAttribute('points', pts.join(' '));
    // second revolution is its own polyline, so no segment crosses the dialog
    const wave2 = document.getElementById('wave').cloneNode();
    wave2.removeAttribute('id');
    pts.length = 0;
    sample(727, 1007, 703);
    wave2.setAttribute('points', pts.join(' '));
    document.getElementById('wave').after(wave2);

    // dot leaders: keep only as many dots as fit the column
    document.querySelectorAll('[data-leader]').forEach(el => {
      while (el.scrollWidth > el.clientWidth) el.textContent = el.textContent.slice(0, -1);
    });
  </script>
</body>
</html>
